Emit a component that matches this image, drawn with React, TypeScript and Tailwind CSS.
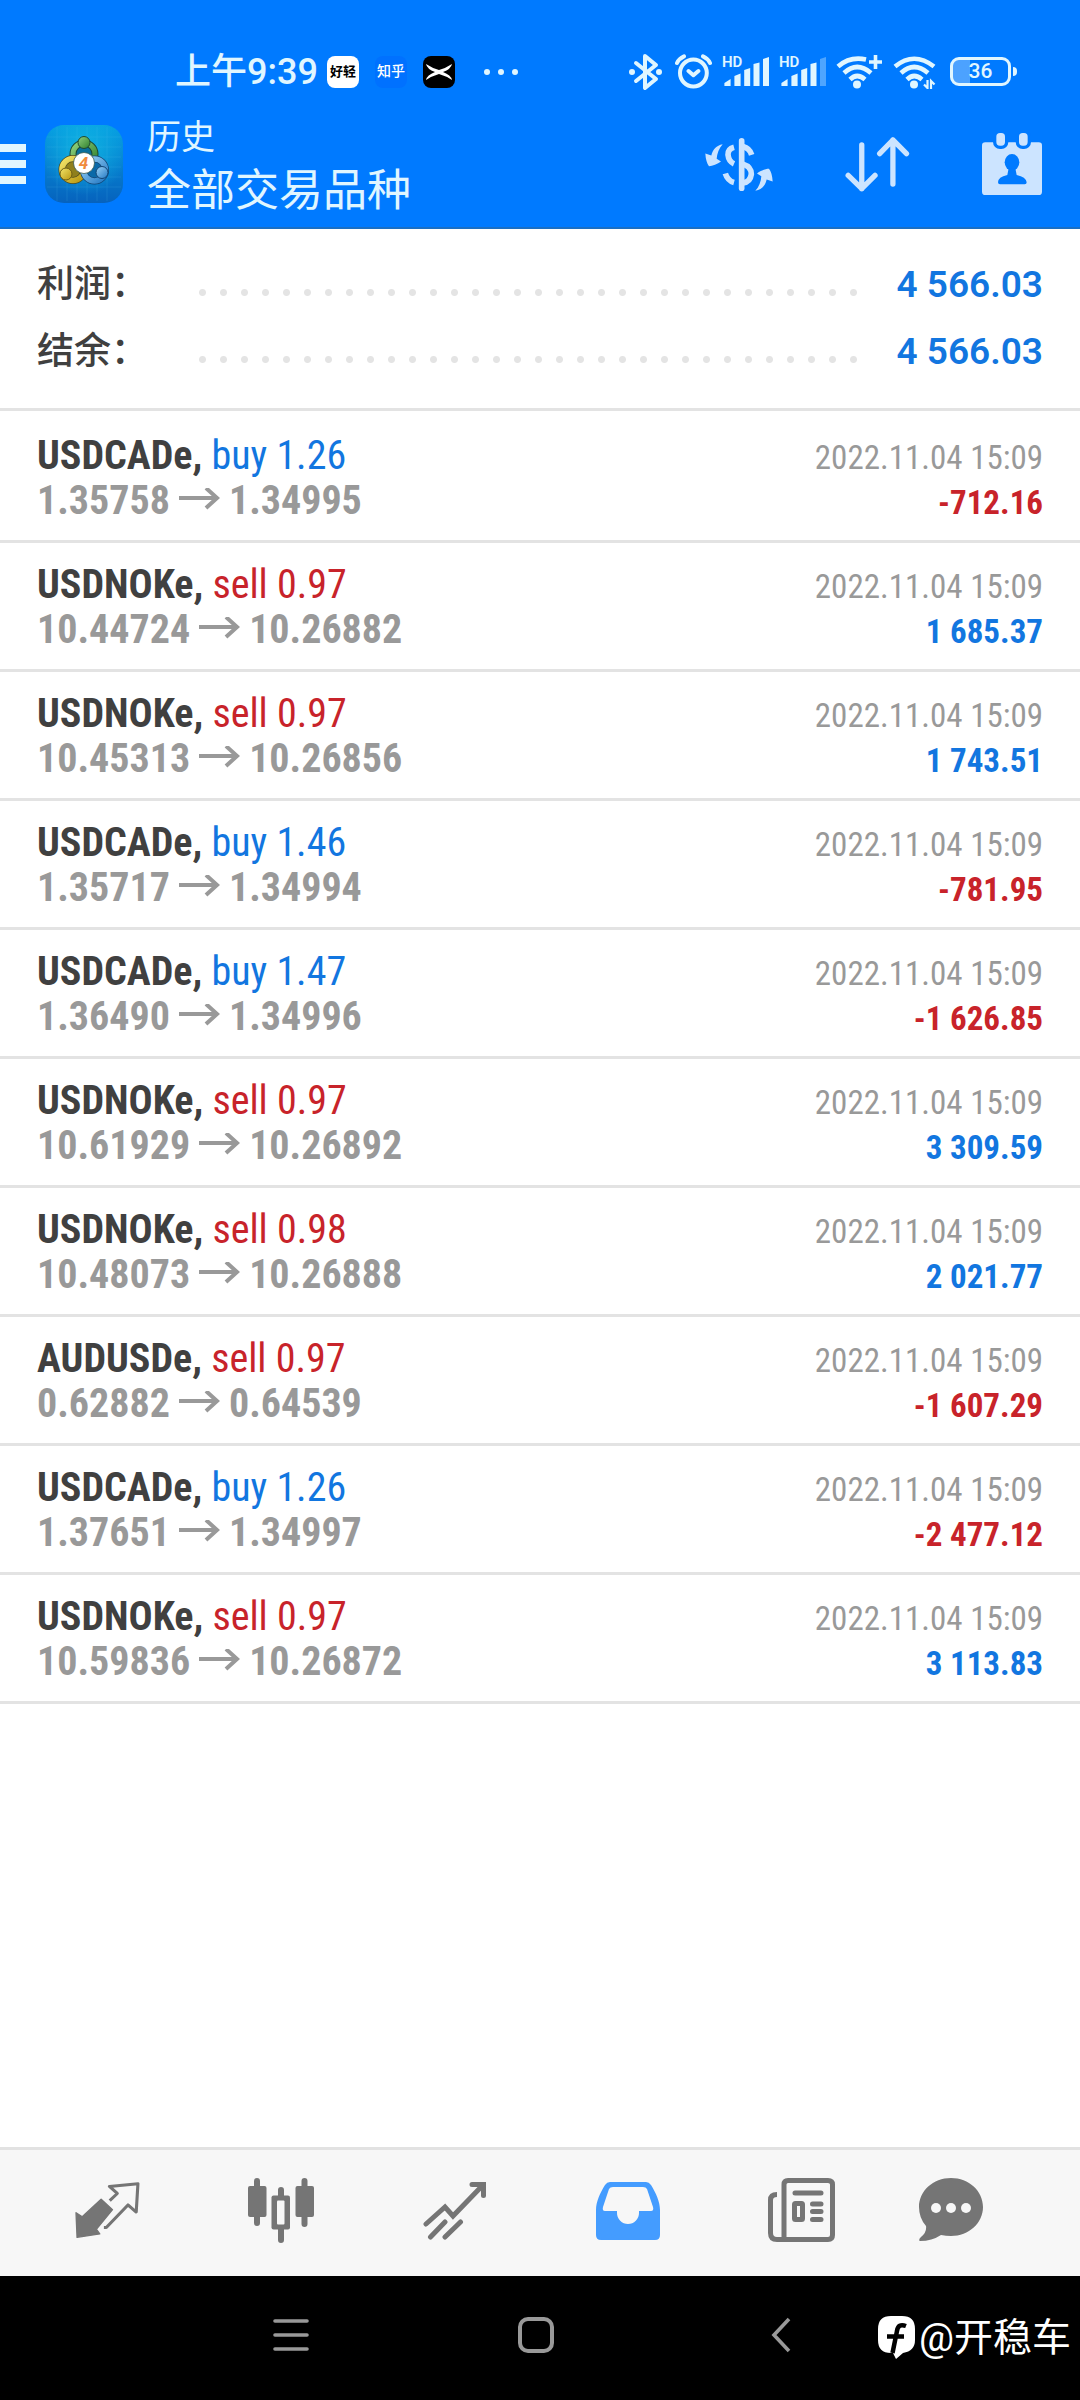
import React from 'react';

interface Trade {
  symbol: string;
  side: 'buy' | 'sell';
  volume: string;
  open: string;
  close: string;
  time: string;
  profit: string;
}

const TIME = '2022.11.04 15:09';

const TRADES: Trade[] = [
  { symbol: 'USDCADe', side: 'buy', volume: '1.26', open: '1.35758', close: '1.34995', time: TIME, profit: '-712.16' },
  { symbol: 'USDNOKe', side: 'sell', volume: '0.97', open: '10.44724', close: '10.26882', time: TIME, profit: '1 685.37' },
  { symbol: 'USDNOKe', side: 'sell', volume: '0.97', open: '10.45313', close: '10.26856', time: TIME, profit: '1 743.51' },
  { symbol: 'USDCADe', side: 'buy', volume: '1.46', open: '1.35717', close: '1.34994', time: TIME, profit: '-781.95' },
  { symbol: 'USDCADe', side: 'buy', volume: '1.47', open: '1.36490', close: '1.34996', time: TIME, profit: '-1 626.85' },
  { symbol: 'USDNOKe', side: 'sell', volume: '0.97', open: '10.61929', close: '10.26892', time: TIME, profit: '3 309.59' },
  { symbol: 'USDNOKe', side: 'sell', volume: '0.98', open: '10.48073', close: '10.26888', time: TIME, profit: '2 021.77' },
  { symbol: 'AUDUSDe', side: 'sell', volume: '0.97', open: '0.62882', close: '0.64539', time: TIME, profit: '-1 607.29' },
  { symbol: 'USDCADe', side: 'buy', volume: '1.26', open: '1.37651', close: '1.34997', time: TIME, profit: '-2 477.12' },
  { symbol: 'USDNOKe', side: 'sell', volume: '0.97', open: '10.59836', close: '10.26872', time: TIME, profit: '3 113.83' },
];

const SUMMARY = [
  { label: '利润：', value: '4 566.03' },
  { label: '结余：', value: '4 566.03' },
];

/* ---------- status bar ---------- */

const BluetoothIcon = () => (
  <svg width="34" height="38" viewBox="0 0 34 38" fill="none" stroke="currentColor" strokeWidth="4" strokeLinecap="round" strokeLinejoin="round">
    <path d="M7 10 27 26 16 35V3L27 12 7 28" />
    <circle cx="3" cy="19" r="3" fill="currentColor" stroke="none" />
    <circle cx="30" cy="19" r="3" fill="currentColor" stroke="none" />
  </svg>
);

const AlarmIcon = () => (
  <svg width="37" height="36" viewBox="0 0 37 36" fill="none" stroke="currentColor" strokeWidth="4" strokeLinecap="round" strokeLinejoin="round">
    <circle cx="18.4" cy="19" r="13.4" />
    <path d="M2 9Q4 4.500 9 2.300M35 9Q33 4.500 28 2.300M13.500 17 18.400 21.200 23.400 17" />
  </svg>
);

const SignalIcon = ({ weak }: { weak?: boolean }) => (
  <svg width="47" height="44" viewBox="0 -6 47 44" fill="currentColor">
    <text x="0" y="11" fontSize="15" fontWeight="600" fontFamily="Roboto, sans-serif">HD</text>
    <path d="M2.400 30V27L8.600 23V30ZM12.400 30V20L18.600 17.500V30ZM22.200 30V14L28.200 12V30ZM31.500 30V8L37.500 6.500V30Z" />
    <path d="M41 30V3L47 1V30Z" opacity={weak ? 0.35 : 1} />
  </svg>
);

const WifiIcon = ({ plus }: { plus?: boolean }) => (
  <svg width={plus ? 47 : 43} height="34" viewBox={plus ? '0 0 47 34' : '0 0 43 34'} fill="none" stroke="currentColor" strokeWidth="4.600">
    <path d={plus ? 'M2 11.500Q14 1 30 4.500' : 'M2 11.500Q21-4 41 11.500'} />
    <path d="M8 18Q21 6 35 18M14 24.500Q21 17.500 29 24.500" />
    <circle cx="21" cy="29.500" r="4" fill="currentColor" stroke="none" />
    {plus ? (
      <path d="M33 7H46M39.500 0V14" strokeWidth="3.600" />
    ) : (
      <path d="M34.500 25V33L31 29.500M38 34V26L41.500 29.500" strokeWidth="2.200" />
    )}
  </svg>
);

const StatusBar = () => (
  <div className="flex h-[45px] items-center justify-between pl-[175px] pr-[63px] text-[#e0f6ff]">
    <div className="flex items-center">
      <span className="w-[152px] text-[36px] leading-[40px] font-medium">上午9:39</span>
      <div className="flex gap-4">
        <span className="flex size-8 items-center justify-center rounded-lg bg-white text-[13px] font-bold text-black">好轻</span>
        <span className="flex size-8 items-center justify-center rounded-lg bg-[#0071ff] text-[14px] font-medium text-white">知乎</span>
        <span className="flex size-8 items-center justify-center rounded-lg bg-black">
          <svg width="26" height="16" viewBox="0 0 26 16" fill="#fff">
            <path d="M0 0Q6 4 13 6 20 4 26 0 25 5 17 8 25 11 26 16 20 12 13 10 6 12 0 16 1 11 9 8 1 5 0 0Z" />
          </svg>
        </span>
      </div>
      <svg className="ml-7" width="36" height="8" viewBox="0 0 36 8" fill="currentColor">
        <circle cx="4" cy="4" r="3" />
        <circle cx="18" cy="4" r="3" />
        <circle cx="32" cy="4" r="3" />
      </svg>
    </div>
    <div className="flex items-center">
      <BluetoothIcon />
      <span className="ml-3"><AlarmIcon /></span>
      <span className="ml-[10px]"><SignalIcon /></span>
      <span className="ml-[10px]"><SignalIcon weak /></span>
      <span className="ml-[10px]"><WifiIcon plus /></span>
      <span className="ml-[10px]"><WifiIcon /></span>
      <span className="ml-[14px] flex h-[29px] w-[61px] items-center justify-center rounded-[9px] border-3 border-current bg-linear-to-r from-white/30 from-30% to-transparent to-30% text-[21px] leading-none font-medium">36</span>
      <span className="ml-[2px] h-[9px] w-1 rounded-r bg-current" />
    </div>
  </div>
);

/* ---------- toolbar ---------- */

const AppLogo = () => (
  <svg width="78" height="78" viewBox="0 0 78 78">
    <defs>
      <linearGradient id="tile" x1="0" y1="0" x2="0" y2="1">
        <stop offset="0" stopColor="#069fe2" />
        <stop offset="1" stopColor="#0662bd" />
      </linearGradient>
      <radialGradient id="glow" cx=".5" cy=".35" r=".55">
        <stop offset="0" stopColor="#14c4e6" stopOpacity=".7" />
        <stop offset="1" stopColor="#14c4e6" stopOpacity="0" />
      </radialGradient>
      <linearGradient id="green" x1="0" y1="0" x2="1" y2="1">
        <stop offset="0" stopColor="#8fd07c" />
        <stop offset="1" stopColor="#2f7f2c" />
      </linearGradient>
      <linearGradient id="gold" x1="0" y1="0" x2="1" y2="1">
        <stop offset="0" stopColor="#f3e56a" />
        <stop offset="1" stopColor="#b8960f" />
      </linearGradient>
      <linearGradient id="sky" x1="0" y1="0" x2="1" y2="1">
        <stop offset="0" stopColor="#9bd3f7" />
        <stop offset="1" stopColor="#2479c4" />
      </linearGradient>
    </defs>
    <rect width="78" height="78" rx="19" fill="url(#tile)" />
    <rect width="78" height="78" rx="19" fill="url(#glow)" />
    <path d="M12 2V76M22 2V76M32 2V76M42 2V76M52 2V76M62 2V76M2 12H76M2 22H76M2 32H76M2 42H76M2 52H76M2 62H76" stroke="#5cc8f0" strokeWidth=".6" opacity=".25" />
    <circle cx="39" cy="29" r="11" fill="#0a6f9c" stroke="#1e4a33" strokeWidth="7" />
    <circle cx="39" cy="29" r="11" fill="none" stroke="url(#green)" strokeWidth="5" />
    <circle cx="28" cy="44.500" r="11" fill="#8f7f1c" stroke="#4d4a1e" strokeWidth="7" />
    <circle cx="28" cy="44.500" r="11" fill="none" stroke="url(#gold)" strokeWidth="5.600" />
    <circle cx="49.500" cy="45" r="11" fill="#0b69a8" stroke="#114474" strokeWidth="7" />
    <circle cx="49.500" cy="45" r="11" fill="none" stroke="url(#sky)" strokeWidth="5.600" />
    <circle cx="39" cy="17.500" r="6" fill="url(#green)" stroke="#1e4a33" />
    <circle cx="21" cy="49" r="6" fill="url(#gold)" stroke="#6b5c14" />
    <circle cx="57" cy="47.500" r="6" fill="url(#sky)" stroke="#114474" />
    <circle cx="39" cy="38" r="10.500" fill="#fff" stroke="#3a5a50" strokeWidth=".8" />
    <text x="38.500" y="44" textAnchor="middle" fontSize="17" fontWeight="700" fontStyle="italic" fontFamily="Roboto, sans-serif" fill="#f08a3c">4</text>
  </svg>
);

const CurrencyIcon = () => (
  <svg width="68" height="53" viewBox="78 54 204 158">
    <g fill="none" stroke="currentColor" strokeWidth="17">
      <path d="M188 62V204" strokeLinecap="round" />
      <path d="M165 81Q146 86 147 104 149 124 165 131M139 160Q146 182 165 187M192 79Q212 84 218 104M192 132Q217 140 217 162 214 186 192 188" />
    </g>
    <path id="swap" d="M131 72C112 76 102 86 97 106L79 100C80 118 84 130 90 138 100 138 116 132 126 124L113 116C114 100 120 84 131 72Z" fill="currentColor" />
    <use href="#swap" transform="rotate(180 180 142)" />
  </svg>
);

const SortIcon = () => (
  <svg width="65" height="55" viewBox="491 54 195 166" fill="none" stroke="currentColor" strokeWidth="16" strokeLinecap="round" strokeLinejoin="round">
    <path d="M541 78V210M500 170 541 210 581 170M635 196V63M595 104 635 63 676 104" />
  </svg>
);

const CalendarIcon = () => (
  <svg width="60" height="62" viewBox="906 42 180 186" fill="currentColor">
    <rect x="906" y="70" width="180" height="158" rx="10" />
    <g stroke="#007aff" strokeWidth="10">
      <rect x="944" y="37" width="36" height="48" rx="16" />
      <rect x="1012" y="37" width="36" height="48" rx="16" />
    </g>
    <g fill="#007aff">
      <ellipse cx="996" cy="130" rx="22" ry="25" />
      <path d="M954 190Q954 174 982 168L986 148H1006L1010 168Q1038 174 1040 190 1040 196 1034 196H960Q954 196 954 190Z" />
    </g>
  </svg>
);

const Toolbar = () => (
  <div className="flex items-center pr-[38px] text-[#cce4ff]">
    <button aria-label="Menu" className="flex w-[26px] flex-col gap-2 text-[#e0f6ff]">
      <span className="h-2 bg-current" />
      <span className="h-2 bg-current" />
      <span className="h-2 bg-current" />
    </button>
    <span className="ml-[19px]"><AppLogo /></span>
    <h1 className="ml-6 flex-1 pt-1 text-[#e0f6ff]">
      <span className="block text-[34px] leading-[50px]">历史</span>
      <span className="block text-[44px] leading-[58px]">全部交易品种</span>
    </h1>
    <div className="flex items-center gap-[72px]">
      <button aria-label="Currency"><CurrencyIcon /></button>
      <button aria-label="Sort"><SortIcon /></button>
      <button aria-label="Period"><CalendarIcon /></button>
    </div>
  </div>
);

/* ---------- history list ---------- */

const ArrowRight = () => (
  <svg className="mx-[9px] inline-block align-baseline" width="41" height="26" viewBox="0 0 41 26" fill="none" stroke="currentColor" strokeWidth="4">
    <path d="M0 10H39M27 0 38 10 27 20" />
  </svg>
);

const TradeRow = ({ trade }: { trade: Trade }) => {
  const loss = trade.profit.startsWith('-');
  return (
    <li className="flex justify-between border-b-3 border-[#e3e3e3] px-[37px] pt-[19px] pb-[15px] font-['Roboto_Condensed','Roboto',sans-serif] leading-[45px]">
      <div className="text-[40px] font-bold">
        <div className="text-[#404040]">
          {trade.symbol}, <span className={`font-normal ${trade.side === 'buy' ? 'text-[#1276e0]' : 'text-[#c8232a]'}`}>{trade.side} {trade.volume}</span>
        </div>
        <div className="text-[#999]">
          {trade.open}<ArrowRight />{trade.close}
        </div>
      </div>
      <div className="pt-[2px] text-right text-[33px]">
        <div className="text-[#999]">{trade.time}</div>
        <div className={`font-bold ${loss ? 'text-[#c8232a]' : 'text-[#1276e0]'}`}>{trade.profit}</div>
      </div>
    </li>
  );
};

/* ---------- bottom tabs ---------- */

const QuotesIcon = () => (
  <svg width="65" height="58" viewBox="218 158 189 172" preserveAspectRatio="none" fill="none" stroke="currentColor" strokeWidth="9" strokeLinejoin="round">
    <path d="M319 216 341 195 318 174 401 166 396 250 372 229 309 296H302" />
    <path d="M221 252 239 264 294 212 327 243 280 301 290 315 224 325Z" fill="currentColor" strokeWidth="4" />
  </svg>
);

const ChartIcon = () => (
  <svg width="66" height="65" viewBox="0 0 66 65" fill="currentColor">
    <path d="M9 3V45M56.500 3V46M33 12V62" stroke="currentColor" strokeWidth="6" strokeLinecap="round" />
    <rect x="0" y="8" width="18.500" height="31" rx="2" />
    <rect x="47.500" y="8" width="18.500" height="31" rx="2" />
    <rect x="23.500" y="17.500" width="18.500" height="34" rx="2" />
    <rect x="29" y="22.500" width="7.500" height="24" rx="1" fill="#f7f7f7" />
  </svg>
);

const TrendIcon = () => (
  <svg width="63" height="59" viewBox="0 0 63 59" fill="none" stroke="currentColor" strokeWidth="5" strokeLinecap="round">
    <path d="M3 43 22 26 30 35 59 5M49 3.500H60.500V14.500M7.500 56 22 41M22 56 37.500 41" />
  </svg>
);

const InboxIcon = () => (
  <svg width="64" height="59" viewBox="0 0 64 59" fill="currentColor" fillRule="evenodd">
    <path d="M14 1H50Q53 1 55 4C60 12 64 21 64 29V54Q64 59 59 59H5Q0 59 0 54V29C0 21 4 12 9 4Q11 1 14 1ZM17 6Q14 6 13 8L7 26Q6 30 9 30H21V32A11 11 0 0 0 43 32V30H55Q58 30 57 26L51 8Q50 6 47 6Z" />
  </svg>
);

const NewsIcon = () => (
  <svg width="67" height="64" viewBox="0 0 67 64" fill="none" stroke="currentColor" strokeWidth="5">
    <path d="M9 16.500Q2.500 16.500 2.500 22V55Q2.500 61.500 9 61.500H60Q64.500 61.500 64.500 57V6.500Q64.500 2.500 60 2.500H20Q16 2.500 16 6.500V61" />
    <path d="M27 15H53M44.500 26H53M44.500 33.500H53M44.500 41.500H53" strokeLinecap="round" />
    <rect x="26.500" y="25.500" width="8" height="16" rx="1" />
  </svg>
);

const ChatIcon = () => (
  <svg width="64" height="64" viewBox="0 0 64 64" fill="currentColor">
    <path d="M32 0C50 0 64 13 64 29S50 58 32 58Q27 58 22 57 13 63 1 63-1 62 2 59 8 54 7 48 0 40 0 29C0 13 14 0 32 0Z" />
    <g fill="#f7f7f7">
      <circle cx="17" cy="30" r="5" />
      <circle cx="32" cy="30" r="5" />
      <circle cx="47" cy="30" r="5" />
    </g>
  </svg>
);

const tabClass = 'flex flex-1 items-center justify-center';

const TabBar = () => (
  <nav className="flex h-[129px] border-t-3 border-[#e2e2e2] bg-[#f7f7f7] pr-[66px] pb-[6px] pl-[21px] text-[#757575]">
    <button aria-label="Quotes" className={tabClass}><QuotesIcon /></button>
    <button aria-label="Chart" className={tabClass}><ChartIcon /></button>
    <button aria-label="Trade" className={tabClass}><TrendIcon /></button>
    <button aria-label="History" className={`${tabClass} text-[#449cff]`}><InboxIcon /></button>
    <button aria-label="News" className={tabClass}><NewsIcon /></button>
    <button aria-label="Messages" className="flex w-[126px] items-center justify-center"><ChatIcon /></button>
  </nav>
);

const SystemNav = () => (
  <div className="relative flex h-[124px] items-center justify-center bg-black pr-[9px] pb-[6px] text-[#999]">
    <button aria-label="Recents" className="flex w-[245px] justify-center">
      <svg width="36" height="36" viewBox="0 0 36 36" stroke="currentColor" strokeWidth="3.600" strokeLinecap="round">
        <path d="M2 4H34M2 18H34M2 32H34" />
      </svg>
    </button>
    <button aria-label="Home" className="flex w-[245px] justify-center">
      <span className="size-9 rounded-[10px] border-4 border-current" />
    </button>
    <button aria-label="Back" className="flex w-[245px] justify-center">
      <svg width="20" height="36" viewBox="0 0 20 36" fill="none" stroke="currentColor" strokeWidth="3.600">
        <path d="M18 2 3 18 18 34" />
      </svg>
    </button>
    <div className="absolute top-10 right-[9px] flex items-center gap-1 text-[39px] leading-[44px] text-white">
      <svg width="37" height="44" viewBox="0 0 37 44">
        <path d="M13 0H24Q37 0 37 13V24Q37 35 25 37L18 43 15 37H13Q0 37 0 24V13Q0 0 13 0Z" fill="#fff" />
        <path d="M28 10Q20 7 19 15L14.500 37M9 20.500H26" fill="none" stroke="#000" strokeWidth="4.500" />
      </svg>
      <span>@开稳车</span>
    </div>
  </div>
);

export default function App() {
  return (
    <div className="flex min-h-screen flex-col bg-white font-['Roboto','Noto_Sans_CJK_SC',sans-serif]">
      <header className="border-b-2 border-[#1a6fc4] bg-[#007aff] pt-[49px] pb-[7px]">
        <StatusBar />
        <div className="mt-[14px]"><Toolbar /></div>
      </header>

      <main className="flex-1">
        <dl className="border-b-3 border-[#e3e3e3] px-[37px] pt-[22px] pb-[23px]">
          {SUMMARY.map((s) => (
            <div key={s.label} className="flex h-[67px] items-center text-[37px]">
              <dt className="w-[155px] font-medium text-[#404040]">{s.label}</dt>
              <span className="mt-4 h-[7px] flex-1 bg-[radial-gradient(circle,#e4e4e4_3px,transparent_4px)] bg-[length:21px_7px]" />
              <dd className="w-[178px] text-right font-semibold text-[#1276e0]">{s.value}</dd>
            </div>
          ))}
        </dl>
        <ul className="pt-[3px]">
          {TRADES.map((t, i) => (
            <TradeRow key={i} trade={t} />
          ))}
        </ul>
      </main>

      <TabBar />
      <SystemNav />
    </div>
  );
}
